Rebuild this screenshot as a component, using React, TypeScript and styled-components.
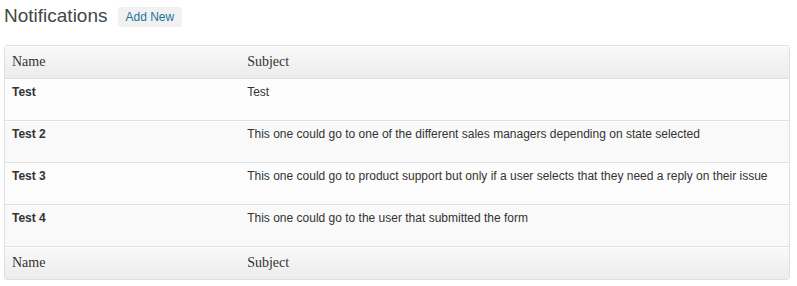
import styled, { createGlobalStyle } from 'styled-components'

const GlobalStyle = createGlobalStyle`
  body {
    margin: 0;
    background: #ffffff;
    font-family: "Liberation Sans", Arial, sans-serif;
    color: #333;
  }
`

const Page = styled.div`
  padding: 1px 7px 0 4px;
`

const TitleBar = styled.div`
  display: flex;
  align-items: center;
  gap: 10px;
  height: 30px;
  margin-bottom: 14px;
`

const Title = styled.h2`
  margin: 0;
  font-size: 19px;
  font-weight: normal;
  color: #464646;
  line-height: 24px;
`

const AddNew = styled.a`
  display: inline-flex;
  align-items: center;
  height: 20px;
  padding: 0 8px;
  margin-top: 1px;
  border-radius: 3px;
  background: #f1f1f1;
  color: #21759b;
  font-size: 12px;
  text-decoration: none;
`

const Table = styled.table`
  width: 100%;
  border-collapse: separate;
  border-spacing: 0;
  border: 1px solid #dfdfdf;
  border-radius: 3px;
  background: #f9f9f9;
  table-layout: fixed;
`

const HeadCell = styled.th<{ $foot?: boolean }>`
  height: 32px;
  padding: 0 7px;
  text-align: left;
  font-family: "Liberation Serif", Georgia, serif;
  font-size: 14px;
  font-weight: normal;
  color: #333;
  background: linear-gradient(to bottom, #f9f9f9, #ececec);
  border-top: ${(p) => (p.$foot ? '1px solid #dfdfdf' : 'none')};
  border-bottom: ${(p) => (p.$foot ? 'none' : '1px solid #dfdfdf')};
  box-shadow: inset 0 1px 0 #ffffff;
`

const Row = styled.tr<{ $alt: boolean }>`
  background: ${(p) => (p.$alt ? '#f9f9f9' : '#fcfcfc')};
`

const Cell = styled.td<{ $last: boolean; $strong?: boolean }>`
  height: 35px;
  vertical-align: top;
  padding: 5px 7px 0;
  font-size: 12px;
  line-height: 14px;
  font-weight: ${(p) => (p.$strong ? 'bold' : 'normal')};
  color: #333;
  border-top: 1px solid #ffffff;
  border-bottom: ${(p) => (p.$last ? 'none' : '1px solid #dfdfdf')};
`

const notifications = [
  { name: 'Test', subject: 'Test' },
  {
    name: 'Test 2',
    subject:
      'This one could go to one of the different sales managers depending on state selected',
  },
  {
    name: 'Test 3',
    subject:
      'This one could go to product support but only if a user selects that they need a reply on their issue',
  },
  { name: 'Test 4', subject: 'This one could go to the user that submitted the form' },
]

export default function App() {
  return (
    <Page>
      <GlobalStyle />
      <TitleBar>
        <Title>Notifications</Title>
        <AddNew href="#">Add New</AddNew>
      </TitleBar>
      <Table>
        <colgroup>
          <col style={{ width: '30%' }} />
          <col />
        </colgroup>
        <thead>
          <tr>
            <HeadCell>Name</HeadCell>
            <HeadCell>Subject</HeadCell>
          </tr>
        </thead>
        <tbody>
          {notifications.map((n, i) => {
            const last = i === notifications.length - 1
            return (
              <Row key={n.name} $alt={i % 2 === 1}>
                <Cell $last={last} $strong>
                  {n.name}
                </Cell>
                <Cell $last={last}>{n.subject}</Cell>
              </Row>
            )
          })}
        </tbody>
        <tfoot>
          <tr>
            <HeadCell $foot>Name</HeadCell>
            <HeadCell $foot>Subject</HeadCell>
          </tr>
        </tfoot>
      </Table>
    </Page>
  )
}
